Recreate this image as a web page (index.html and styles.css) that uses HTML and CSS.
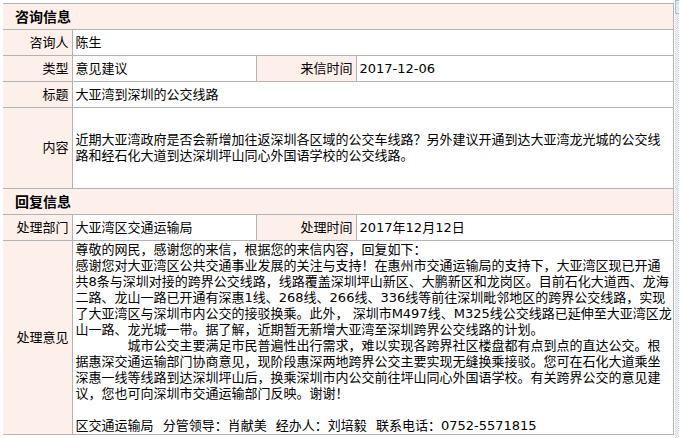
FILE: index.html
```html
<!DOCTYPE html>
<html lang="zh-CN">
<head>
<meta charset="utf-8">
<title>咨询信息</title>
<link rel="stylesheet" href="styles.css">
</head>
<body>
<div class="page">
  <table class="info">
    <colgroup>
      <col class="c1"><col class="c2"><col class="c3"><col class="c4">
    </colgroup>
    <tr class="row">
      <td colspan="4" class="head">咨询信息</td>
    </tr>
    <tr class="row">
      <td class="label">咨询人</td>
      <td colspan="3" class="val">陈生</td>
    </tr>
    <tr class="row">
      <td class="label">类型</td>
      <td class="val">意见建议</td>
      <td class="label">来信时间</td>
      <td class="val">2017-12-06</td>
    </tr>
    <tr class="row">
      <td class="label">标题</td>
      <td colspan="3" class="val">大亚湾到深圳的公交线路</td>
    </tr>
    <tr class="content">
      <td class="label">内容</td>
      <td colspan="3" class="val text">近期大亚湾政府是否会新增加往返深圳各区域的公交车线路？另外建议开通到达大亚湾龙光城的公交线<br>路和经石化大道到达深圳坪山同心外国语学校的公交线路。</td>
    </tr>
    <tr class="row">
      <td colspan="4" class="head">回复信息</td>
    </tr>
    <tr class="row">
      <td class="label">处理部门</td>
      <td class="val">大亚湾区交通运输局</td>
      <td class="label">处理时间</td>
      <td class="val">2017年12月12日</td>
    </tr>
    <tr class="reply">
      <td class="label">处理意见</td>
      <td colspan="3" class="val text">尊敬的网民，感谢您的来信，根据您的来信内容，回复如下：<br>感谢您对大亚湾区公共交通事业发展的关注与支持！在惠州市交通运输局的支持下，大亚湾区现已开通<br>共8条与深圳对接的跨界公交线路，线路覆盖深圳坪山新区、大鹏新区和龙岗区。目前石化大道西、龙海<br>二路、龙山一路已开通有深惠1线、268线、266线、336线等前往深圳毗邻地区的跨界公交线路，实现<br>了大亚湾区与深圳市内公交的接驳换乘。此外，&nbsp;深圳市M497线、M325线公交线路已延伸至大亚湾区龙<br>山一路、龙光城一带。据了解，近期暂无新增大亚湾至深圳跨界公交线路的计划。<br>　　　　城市公交主要满足市民普遍性出行需求，难以实现各跨界社区楼盘都有点到点的直达公交。根<br>据惠深交通运输部门协商意见，现阶段惠深两地跨界公交主要实现无缝换乘接驳。您可在石化大道乘坐<br>深惠一线等线路到达深圳坪山后，换乘深圳市内公交前往坪山同心外国语学校。有关跨界公交的意见建<br>议，您也可向深圳市交通运输部门反映。谢谢！<br><br><span class="sig">区交通运输局 分管领导：肖献美 经办人：刘培毅 联系电话：0752-5571815</span></td>
    </tr>
  </table>
  <div class="scroll"><div class="thumb"></div></div>
</div>
</body>
</html>
```

FILE: styles.css
```css
html, body {
  margin: 0;
  padding: 0;
  background: #ffffff;
}
.page {
  position: relative;
  width: 679px;
  height: 438px;
  overflow: hidden;
  padding: 3px 0 0 3px;
  box-sizing: border-box;
  font-family: "DejaVu Sans", "Noto Sans CJK SC", sans-serif;
  font-size: 13px;
  color: #000;
}
.info {
  border-collapse: collapse;
  table-layout: fixed;
  width: 670px;
}
.c1 { width: 69px; }
.c2 { width: 184px; }
.c3 { width: 100px; }
.c4 { width: 317px; }
.info td {
  border: 1px solid #b3b3b3;
  padding: 0 3px;
  line-height: 16px;
  white-space: nowrap;
  overflow: hidden;
}
.info tr td:first-child {
  border-left: 0;
}
.row { height: 26px; }
.content { height: 81px; }
.reply { height: 194px; }
.head {
  background: #fdf0ea;
  font-weight: bold;
  font-size: 14px;
  padding-left: 12px !important;
}
.label {
  background: #fdf0ea;
  text-align: right;
}
.val {
  background: #fff;
  text-align: left;
}
.text {
  vertical-align: middle;
}
.sig {
  word-spacing: 5px;
}
.scroll {
  position: absolute;
  top: 0;
  right: 0;
  width: 4px;
  height: 438px;
  background-color: #eef3f8;
  background-image: repeating-conic-gradient(#cfdbe8 0 25%, #f4f7fb 0 50%);
  background-size: 2px 2px;
}
.thumb {
  height: 14px;
  border: 1px solid #a9bfd6;
  border-right: 0;
  background: #dde8f3;
  box-sizing: border-box;
}
```
